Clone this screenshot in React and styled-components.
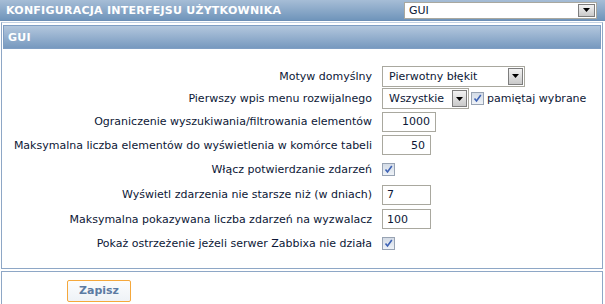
import React from "react";
import styled, { createGlobalStyle } from "styled-components";

const Global = createGlobalStyle`
  html, body { margin: 0; padding: 0; background: #fff; }
  body { font-family: "DejaVu Sans", Verdana, sans-serif; font-size: 11px; color: #0c1736; }
  * { box-sizing: border-box; }
`;

const Page = styled.div`
  width: 605px;
  height: 304px;
  overflow: hidden;
  background: #fff;
`;

const TopBar = styled.div`
  height: 21px;
  display: flex;
  align-items: center;
  justify-content: space-between;
  padding: 0 8px 0 6px;
  background: linear-gradient(#a6bdd6, #7095bb);
  border-bottom: 1px solid #6d8fb5;
`;

const Title = styled.div`
  color: #fff;
  font-weight: bold;
  font-size: 11px;
  letter-spacing: 0.25px;
`;

const Panel = styled.div`
  margin: ${(p) => p.$mt || 0}px 2px 0 1px;
  border: 1px solid #8ea7c6;
  border-top-color: ${(p) => p.$topColor || "#8ea7c6"};
  padding: 2px 1px 0 1px;
  height: ${(p) => p.$h}px;
`;

const SubHeader = styled.div`
  height: 24px;
  display: flex;
  align-items: center;
  padding-left: 4px;
  color: #fff;
  font-weight: bold;
  letter-spacing: 0.25px;
  background: linear-gradient(#b3c7dd, #7799bf);
  border: 1px solid #7f9ec3;
`;

const Form = styled.div`
  padding-top: 16px;
  display: flex;
  flex-direction: column;
`;

const Row = styled.div`
  height: ${(p) => p.$h}px;
  display: grid;
  grid-template-columns: 369px 1fr;
  column-gap: 10px;
  align-items: center;
`;

const Label = styled.div`
  text-align: right;
  white-space: nowrap;
`;

const Controls = styled.div`
  display: flex;
  align-items: center;
  gap: 2px;
`;

const SelectBox = styled.div`
  width: ${(p) => p.$w}px;
  height: ${(p) => p.$h || 21}px;
  display: flex;
  align-items: stretch;
  background: #fff;
  border: 1px solid #a9a89f;
  padding: 1px;
`;

const SelectText = styled.div`
  flex: 1;
  display: flex;
  align-items: center;
  padding-left: ${(p) => p.$pl || 5}px;
  color: #0c1736;
`;

const Arrow = styled.div`
  width: ${(p) => p.$w || 15}px;
  display: flex;
  align-items: center;
  justify-content: center;
  background: linear-gradient(#f2f2f2, #c9c9c9);
  border: 1px solid #7d7d7d;
`;

const Input = styled.div`
  width: ${(p) => p.$w}px;
  height: 20px;
  border: 1px solid #a9a89f;
  display: flex;
  align-items: center;
  justify-content: ${(p) => (p.$right ? "flex-end" : "flex-start")};
  padding: 0 5px 0 4px;
  color: #0c1736;
  background: #fff;
`;

const Check = styled.span`
  width: 13px;
  height: 13px;
  border: 1px solid #98a3b3;
  background: linear-gradient(#d3dbe6, #eef2f7);
  display: inline-flex;
  align-items: center;
  justify-content: center;
`;

const CheckLabel = styled.span`
  margin-left: 1px;
`;

const Footer = styled.div`
  height: 33px;
  display: flex;
  align-items: center;
  padding-left: 64px;
`;

const Button = styled.button`
  width: 64px;
  height: 22px;
  border: 1px solid #f5a83c;
  border-radius: 2px;
  background: linear-gradient(#fbfcfd, #eef2f7);
  color: #5c7ba3;
  font-family: "DejaVu Sans", Verdana, sans-serif;
  font-size: 11px;
  font-weight: bold;
  padding: 0;
`;

const Tri = () => (
  <svg width="7" height="4" viewBox="0 0 7 4">
    <path d="M0 0H7L3.5 4Z" fill="#000" />
  </svg>
);

const Tick = () => (
  <svg width="9" height="9" viewBox="0 0 9 9">
    <path d="M1.5 4.5L3.5 7L7.8 1" stroke="#3d62b5" strokeWidth="1.6" fill="none" />
  </svg>
);

const Select = ({ w, h, text, aw, pl }) => (
  <SelectBox $w={w} $h={h}>
    <SelectText $pl={pl}>{text}</SelectText>
    <Arrow $w={aw}>
      <Tri />
    </Arrow>
  </SelectBox>
);

export default function App() {
  return (
    <Page>
      <Global />
      <TopBar>
        <Title>KONFIGURACJA INTERFEJSU UŻYTKOWNIKA</Title>
        <Select w={193} h={17} text="GUI" aw={17} pl={3} />
      </TopBar>
      <Panel $mt={1} $h={247} $topColor="#c3d2e3">
        <SubHeader>GUI</SubHeader>
        <Form>
          <Row $h={22}>
            <Label>Motyw domyślny</Label>
            <Controls>
              <Select w={143} text="Pierwotny błękit" />
            </Controls>
          </Row>
          <Row $h={23}>
            <Label>Pierwszy wpis menu rozwijalnego</Label>
            <Controls>
              <Select w={87} text="Wszystkie" />
              <Check>
                <Tick />
              </Check>
              <CheckLabel>pamiętaj wybrane</CheckLabel>
            </Controls>
          </Row>
          <Row $h={23}>
            <Label>Ograniczenie wyszukiwania/filtrowania elementów</Label>
            <Controls>
              <Input $w={54} $right>1000</Input>
            </Controls>
          </Row>
          <Row $h={24}>
            <Label>Maksymalna liczba elementów do wyświetlenia w komórce tabeli</Label>
            <Controls>
              <Input $w={49} $right>50</Input>
            </Controls>
          </Row>
          <Row $h={25}>
            <Label>Włącz potwierdzanie zdarzeń</Label>
            <Controls>
              <Check>
                <Tick />
              </Check>
            </Controls>
          </Row>
          <Row $h={25}>
            <Label>Wyświetl zdarzenia nie starsze niż (w dniach)</Label>
            <Controls>
              <Input $w={49}>7</Input>
            </Controls>
          </Row>
          <Row $h={24}>
            <Label>Maksymalna pokazywana liczba zdarzeń na wyzwalacz</Label>
            <Controls>
              <Input $w={49}>100</Input>
            </Controls>
          </Row>
          <Row $h={24}>
            <Label>Pokaż ostrzeżenie jeżeli serwer Zabbixa nie działa</Label>
            <Controls>
              <Check>
                <Tick />
              </Check>
            </Controls>
          </Row>
        </Form>
      </Panel>
      <Panel $mt={2} $h={35}>
        <Footer>
          <Button>Zapisz</Button>
        </Footer>
      </Panel>
    </Page>
  );
}
